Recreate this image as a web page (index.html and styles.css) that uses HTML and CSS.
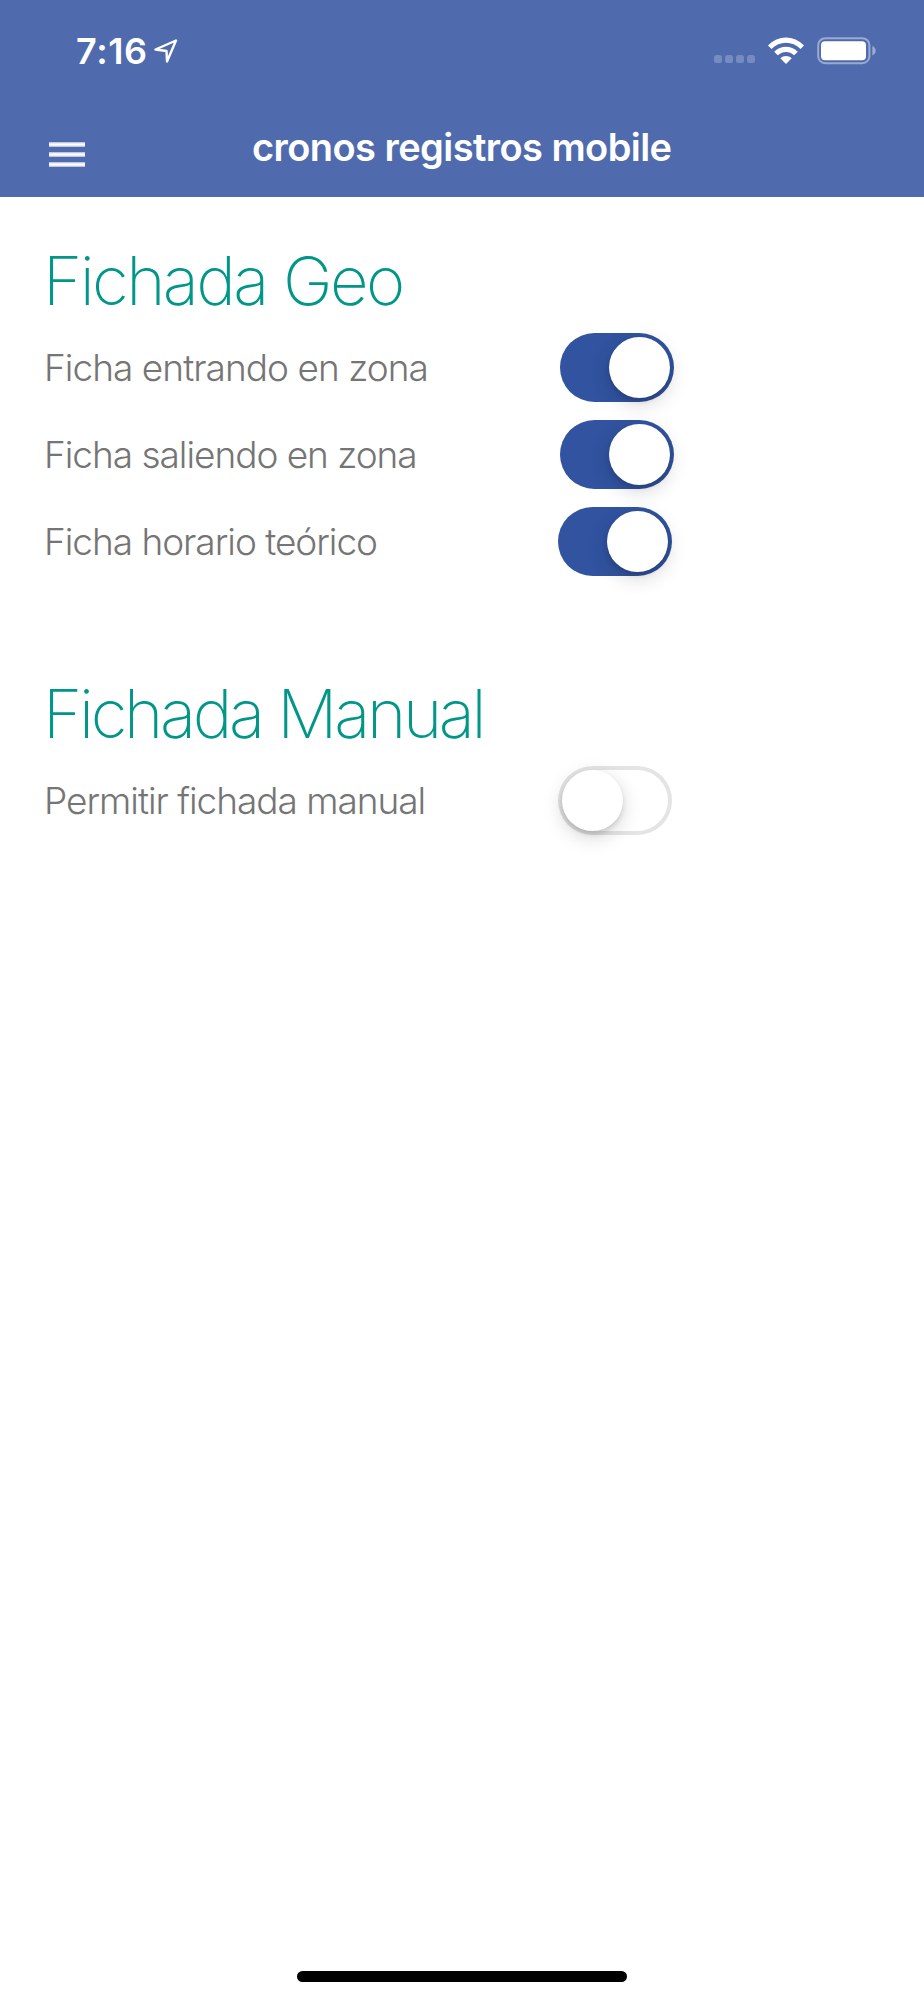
FILE: index.html
```
<!DOCTYPE html>
<html lang="es">
<head>
	<meta charset="UTF-8">
	<title>cronos registros mobile</title>
	<link rel="stylesheet" href="styles.css">
</head>
<body>
	<header>
		<div class="status">
			<span class="time">7:16</span>
			<svg class="location" width="24" height="24" viewBox="0 0 24 24"><path d="M22 1.5L1.5 10.5L12.5 12L13 22.5Z"/></svg>
			<div class="dots"><i></i><i></i><i></i><i></i></div>
			<svg class="wifi" width="38" height="28" viewBox="0 0 38 28">
				<path d="M1 8.5C11-2.2 27-2.2 37 8.5L33.5 12C25.5 3.8 12.5 3.8 4.5 12Z"/>
				<path d="M7.2 14.8C14 8 24 8 30.8 14.8L27.2 18.3C22.5 13.8 15.5 13.8 10.8 18.3Z"/>
				<path d="M13.3 21.2C16.6 18.2 21.4 18.2 24.7 21.2L19 27Z"/>
			</svg>
			<svg class="battery" width="60" height="28" viewBox="0 0 60 28">
				<rect class="shell" x="1.2" y="1.2" width="51.2" height="25" rx="7"/>
				<rect x="4" y="4.3" width="45" height="19" rx="4"/>
				<path class="cap" d="M55.3 9V18.5Q58.7 17 58.7 13.8Q58.7 10.5 55.3 9Z"/>
			</svg>
		</div>
		<div class="bar">
			<div class="menu"><i></i><i></i><i></i></div>
			<h1>cronos registros mobile</h1>
		</div>
	</header>

	<main>
		<section class="geo">
			<h2>Fichada Geo</h2>
			<div class="row">
				<span class="label entrando">Ficha entrando en zona</span>
				<span class="switch wide on"></span>
			</div>
			<div class="row">
				<span class="label">Ficha saliendo en zona</span>
				<span class="switch wide on"></span>
			</div>
			<div class="row">
				<span class="label">Ficha horario teórico</span>
				<span class="switch on"></span>
			</div>
		</section>
		<section class="manual">
			<h2>Fichada Manual</h2>
			<div class="row">
				<span class="label">Permitir fichada manual</span>
				<span class="switch"></span>
			</div>
		</section>
	</main>

	<footer><div class="home"></div></footer>
</body>
</html>
```
FILE: styles.css
```
body,h1,h2{
	margin:0;
	padding:0;
}
body{
	display:flex;
	flex-direction:column;
	height:2000px;
	overflow:hidden;
	background:#fff;
	font-family:Inter,"Liberation Sans",sans-serif;
}
header{
	height:197px;
	background:#4f6bad;
	color:#fff;
}
.status{
	display:flex;
	height:101px;
	align-items:center;
}
.time{
	width:70px;
	margin-left:76px;
	font-size:36px;
	font-weight:600;
	line-height:40px;
	letter-spacing:.6px;
	white-space:nowrap;
}
.location{
	margin-left:8px;
	fill:none;
	stroke:#fff;
	stroke-width:2.4;
	stroke-linejoin:round;
}
.dots{
	display:flex;
	gap:3px;
	margin:17px 12px 0 auto;
}
.dots i{
	width:8px;
	height:8px;
	border-radius:2.5px;
	background:#768bbf;
}
.wifi{
	margin-right:12px;
	fill:#fff;
}
.battery{
	margin-right:47px;
	fill:#fff;
}
.battery .shell{
	fill:none;
	stroke:#9aaad0;
	stroke-width:2;
}
.battery .cap{
	fill:#9aaad0;
}
.bar{
	display:flex;
	height:96px;
}
.menu{
	display:flex;
	flex-direction:column;
	gap:5px;
	width:36px;
	margin:41px 0 0 49px;
}
.menu i{
	height:5px;
	background:linear-gradient(#a7b5d6,#fff 40%,#fff 60%,#a7b5d6);
}
h1{
	margin:23px 0 0 167px;
	font-size:38px;
	font-weight:600;
	line-height:46px;
	letter-spacing:-.56px;
	white-space:nowrap;
}
main{
	flex:1;
	padding:44px 0 0 44px;
}
.manual{
	margin-top:89px;
}
h2{
	height:83px;
	margin-left:-1px;
	font-size:67px;
	font-weight:200;
	line-height:80px;
	letter-spacing:-2.6px;
	color:#009688;
	white-space:nowrap;
}
.manual h2{
	letter-spacing:-3.3px;
}
.row{
	display:flex;
	align-items:center;
	width:630px;
	height:87px;
}
.label{
	width:514px;
	font-size:37px;
	font-weight:300;
	line-height:46px;
	letter-spacing:-1.03px;
	color:#757575;
	white-space:nowrap;
}
.entrando{
	letter-spacing:-.96px;
}
.switch{
	box-sizing:border-box;
	width:114px;
	height:69px;
	padding:4px;
	border-radius:35px;
	background:#fff;
	box-shadow:inset 0 0 0 4px #e4e4e4;
}
.switch.wide{
	margin-left:2px;
}
.switch:before{
	content:"";
	display:block;
	width:61px;
	height:61px;
	border-radius:50%;
	background:#fff;
	box-shadow:0 6px 20px rgba(0,0,0,.16),0 3px 5px rgba(0,0,0,.12);
}
.switch.on{
	background:#3153a0;
	box-shadow:none;
}
.switch.on:before{
	margin-left:45px;
}
footer{
	display:flex;
	justify-content:center;
	height:29px;
}
.home{
	width:330px;
	height:11px;
	border-radius:6px;
	background:#000;
}
```
